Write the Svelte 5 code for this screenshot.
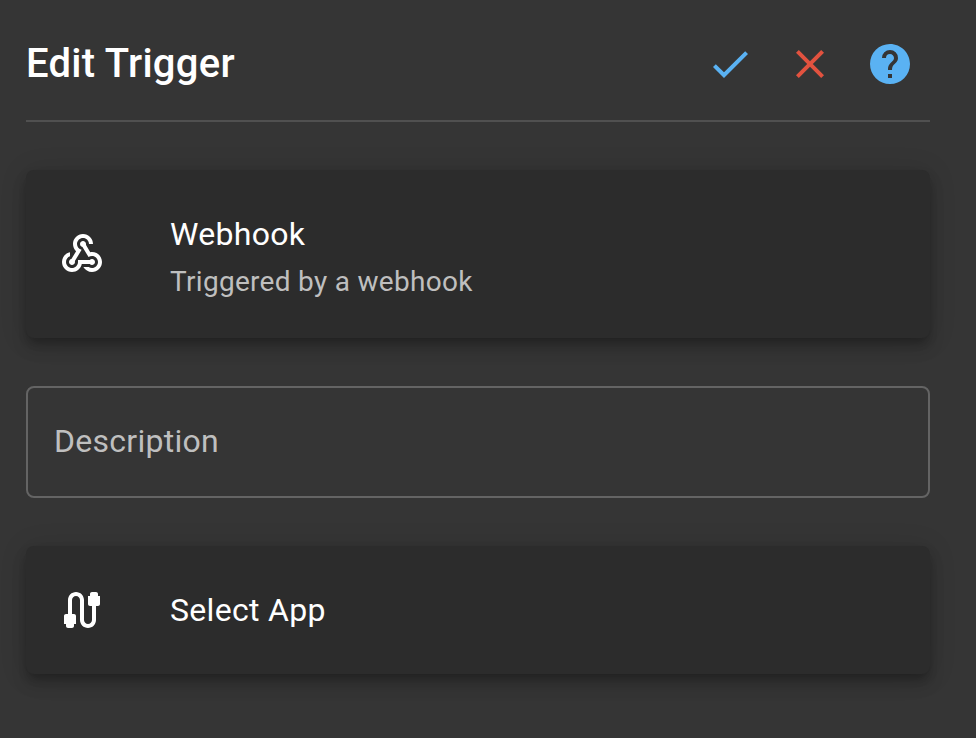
<script>
  const cards = [
    {
      title: 'Webhook',
      subtitle: 'Triggered by a webhook',
      icon: 'M10 15h5.88c.27-.31.67-.5 1.12-.5.83 0 1.5.67 1.5 1.5s-.67 1.5-1.5 1.5c-.44 0-.84-.19-1.12-.5H11.9c-.46 2.28-2.48 4-4.9 4-2.76 0-5-2.24-5-5 0-2.42 1.72-4.44 4-4.9v2.07C4.84 13.58 4 14.7 4 16c0 1.65 1.35 3 3 3s3-1.35 3-3v-1zm2.5-11c1.65 0 3 1.35 3 3h2c0-2.76-2.24-5-5-5s-5 2.24-5 5c0 1.43.6 2.71 1.55 3.62l-2.35 3.9c-.68.14-1.2.75-1.2 1.48 0 .83.67 1.5 1.5 1.5s1.5-.67 1.5-1.5c0-.16-.02-.31-.07-.45l3.38-5.63C10.49 9.61 9.5 8.42 9.5 7c0-1.65 1.35-3 3-3zm4.5 9c-.64 0-1.23.2-1.72.54l-3.05-5.07C11.53 8.35 11 7.74 11 7c0-.83.67-1.5 1.5-1.5S14 6.17 14 7c0 .15-.02.29-.06.43l2.19 3.65c.28-.05.57-.08.87-.08 2.76 0 5 2.24 5 5s-2.24 5-5 5c-1.85 0-3.47-1.01-4.33-2.5h2.67c.48.32 1.05.5 1.66.5 1.65 0 3-1.35 3-3s-1.35-3-3-3z',
    },
    {
      title: 'Select App',
      icon: 'M20 5V4c0-.55-.45-1-1-1h-2c-.55 0-1 .45-1 1v1h-1v4c0 .55.45 1 1 1h1v7c0 1.1-.9 2-2 2s-2-.9-2-2V7c0-2.21-1.79-4-4-4S5 4.79 5 7v7H4c-.55 0-1 .45-1 1v4h1v1c0 .55.45 1 1 1h2c.55 0 1-.45 1-1v-1h1v-4c0-.55-.45-1-1-1H7V7c0-1.1.9-2 2-2s2 .9 2 2v10c0 2.21 1.79 4 4 4s4-1.79 4-4v-7h1c.55 0 1-.45 1-1V5h-1z',
    },
  ];
</script>

{#snippet card(item)}
  <section class="card" class:tall={item.subtitle}>
    <svg viewBox="0 0 24 24"><path d={item.icon} /></svg>
    <div class="text">
      <div class="card-title">{item.title}</div>
      {#if item.subtitle}<div class="subtitle">{item.subtitle}</div>{/if}
    </div>
  </section>
{/snippet}

<main>
  <header>
    <h1>Edit Trigger</h1>
    <div class="actions">
      <svg class="blue" viewBox="0 0 24 24"><path d="M21,7L9,19L3.5,13.5L4.91,12.09L9,16.17L19.59,5.59L21,7Z" /></svg>
      <svg class="red" viewBox="0 0 24 24"><path d="M19,6.41L17.59,5L12,10.59L6.41,5L5,6.41L10.59,12L5,17.59L6.41,19L12,13.41L17.59,19L19,17.59L13.41,12L19,6.41Z" /></svg>
      <svg class="blue" viewBox="0 0 24 24"><path d="M15.07,11.25L14.17,12.17C13.45,12.89 13,13.5 13,15H11V14.5C11,13.39 11.45,12.39 12.17,11.67L13.41,10.41C13.78,10.05 14,9.55 14,9C14,7.89 13.1,7 12,7A2,2 0 0,0 10,9H8A4,4 0 0,1 12,5A4,4 0 0,1 16,9C16,9.88 15.64,10.67 15.07,11.25M13,19H11V17H13M12,2A10,10 0 0,0 2,12A10,10 0 0,0 12,22A10,10 0 0,0 22,12C22,6.47 17.5,2 12,2Z" /></svg>
    </div>
  </header>
  {@render card(cards[0])}
  <div class="field">Description</div>
  {@render card(cards[1])}
</main>

<style>
  :global(body) {
    background: #353535;
  }
  main {
    box-sizing: border-box;
    height: 738px;
    padding: 8px 46px 0 26px;
    display: flex;
    flex-direction: column;
    gap: 48px;
    overflow: hidden;
    background: #353535;
    color: #fff;
    font-family: Roboto, sans-serif;
  }
  header {
    box-sizing: border-box;
    height: 114px;
    flex: none;
    display: flex;
    justify-content: space-between;
    align-items: center;
    padding-right: 16px;
    border-bottom: 2px solid #505050;
  }
  h1 {
    margin: 0;
    font-size: 40px;
    line-height: 64px;
    font-weight: 500;
    letter-spacing: 0.28px;
  }
  .actions {
    display: flex;
    gap: 32px;
  }
  svg {
    width: 48px;
    height: 48px;
    flex: none;
    fill: currentColor;
  }
  .blue {
    color: #5ab2f3;
  }
  .red {
    color: #e2523f;
  }
  .card {
    box-sizing: border-box;
    height: 128px;
    flex: none;
    display: flex;
    align-items: center;
    gap: 64px;
    padding: 0 32px;
    border-radius: 8px;
    background: #2c2c2c;
    box-shadow:
      0 6px 10px -2px rgba(0, 0, 0, 0.2),
      0 10px 16px 0 rgba(0, 0, 0, 0.14),
      0 2px 28px 0 rgba(0, 0, 0, 0.12);
  }
  .card.tall {
    height: 168px;
  }
  .text {
    display: flex;
    flex-direction: column;
    gap: 4px;
  }
  .tall .text {
    padding-top: 4px;
  }
  .card-title {
    font-size: 32px;
    line-height: 48px;
    letter-spacing: 0.3px;
  }
  .subtitle {
    font-size: 28px;
    line-height: 40px;
    letter-spacing: 0.3px;
    color: #bfbfbf;
  }
  .field {
    box-sizing: border-box;
    height: 112px;
    flex: none;
    display: flex;
    align-items: center;
    padding: 0 26px 2px;
    border: 2px solid #646464;
    border-radius: 8px;
    font-size: 32px;
    letter-spacing: 0.27px;
    color: #bfbfbf;
  }
</style>
